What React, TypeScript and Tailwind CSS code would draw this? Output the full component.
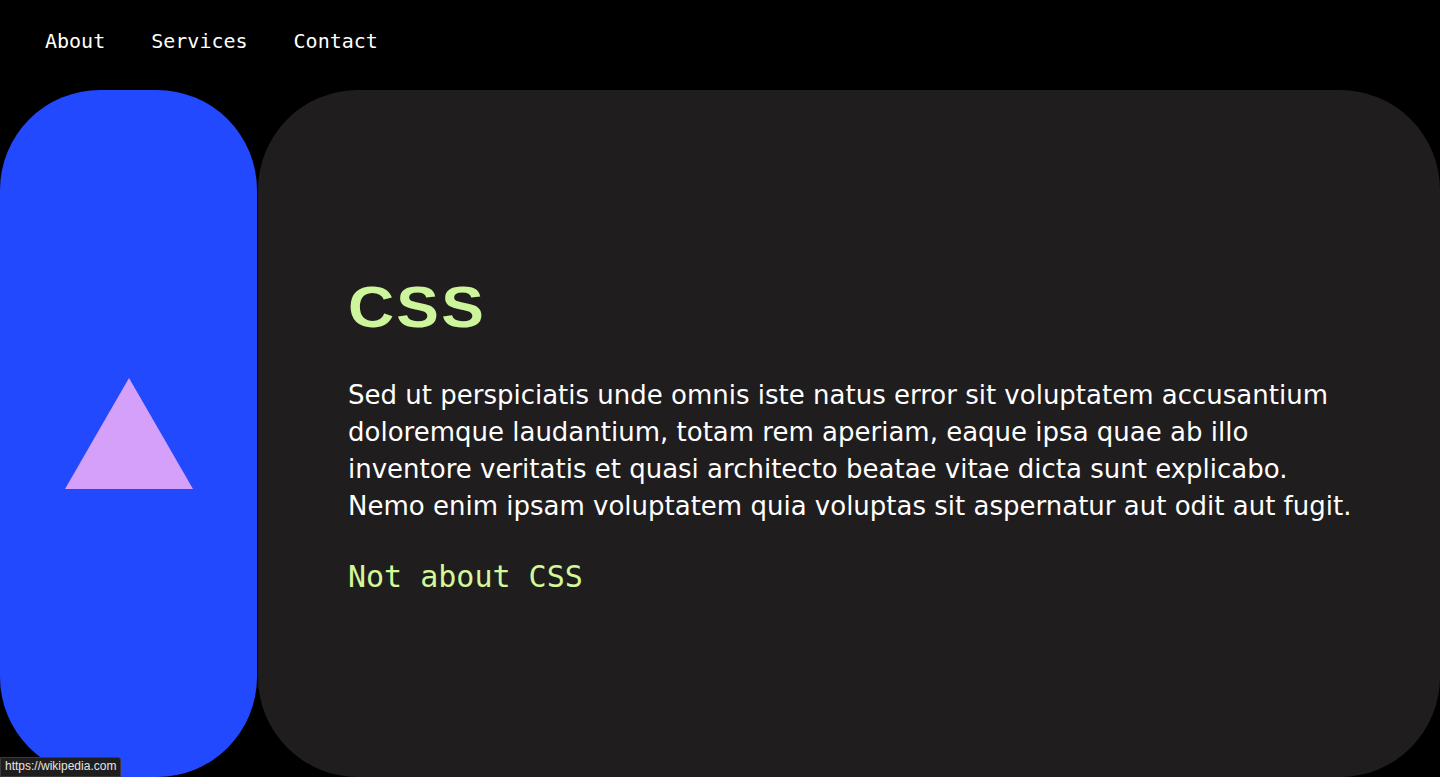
import React from "react";

const mono = { fontFamily: '"DejaVu Sans Mono", "Liberation Mono", monospace' };

export default function App() {
  return (
    <div className="relative w-[1440px] h-[777px] overflow-hidden bg-black text-white">
      <nav className="flex h-[90px] items-start pt-[27px] pl-[22px] text-[20px] leading-[28px] font-['DejaVu_Sans_Mono',monospace]">
        <a className="px-[23px]">About</a>
        <a className="px-[23px]">Services</a>
        <a className="px-[23px]">Contact</a>
      </nav>

      <main className="flex h-[687px] gap-px">
        <section className="flex w-[257px] shrink-0 items-center justify-center rounded-[100px] bg-[#2249fe]">
          <svg width="128" height="111" viewBox="0 0 128 111">
            <polygon points="64,0 128,111 0,111" fill="#d4a0f9" />
          </svg>
        </section>

        <section className="flex flex-1 flex-col justify-center rounded-[100px] bg-[#201d1e] pl-[90px] pr-[80px] pt-[4px]">
          <h1 className="mt-[2px] font-['Liberation_Sans',sans-serif] text-[57px] font-bold leading-none tracking-[2px] text-[#cdf59b] scale-x-[1.12] origin-left">
            CSS
          </h1>
          <p className="mt-[41px] max-w-[1012px] font-['DejaVu_Sans',sans-serif] text-[26px] leading-[37px] text-white">
            Sed ut perspiciatis unde omnis iste natus error sit voluptatem accusantium doloremque laudantium, totam rem aperiam, eaque ipsa quae ab illo inventore veritatis et quasi architecto beatae vitae dicta sunt explicabo. Nemo enim ipsam voluptatem quia voluptas sit aspernatur aut odit aut fugit.
          </p>
          <p className="mt-[34px] text-[30px] leading-[36px] text-[#d4f799]" style={mono}>
            Not about CSS
          </p>
        </section>
      </main>

      <div className="absolute bottom-0 left-0 rounded-tr-[3px] border border-[#3a3a3a] bg-[#1e1e1e] px-[4px] pt-[1px] pb-[2px] font-['Liberation_Sans',sans-serif] text-[12px] leading-[15px] text-[#e5e5e5]">
        https://wikipedia.com
      </div>
    </div>
  );
}
